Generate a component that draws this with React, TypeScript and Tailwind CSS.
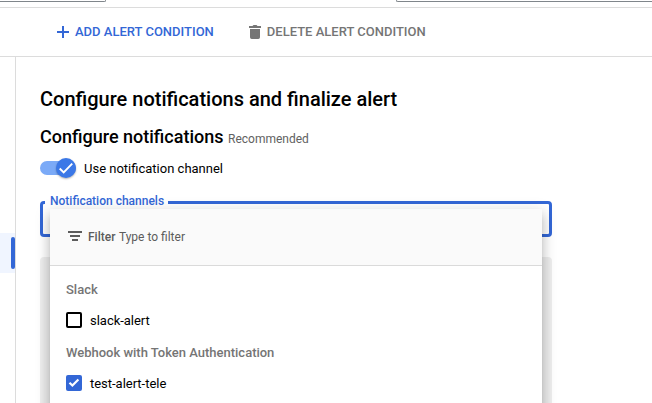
import type { ReactNode } from 'react';

function GroupLabel({ children }: { children: ReactNode }) {
  return <div className="flex h-[30px] items-center pt-0.5 text-[13px] font-medium tracking-[-0.01px] text-[#757575]">{children}</div>;
}

function Option({ label, checked = false }: { label: string; checked?: boolean }) {
  return (
    <label className="mb-px flex h-8 items-center gap-2 text-[13px] tracking-[-0.02px] text-black">
      {checked ? (
        <span className="flex size-4 items-center justify-center rounded-[2px] bg-[#3367d6]">
          <svg viewBox="0 0 16 16" className="size-4" fill="none" stroke="#fff" strokeWidth="2.2">
            <path d="M3.500 7.700 6.400 10.500 12.400 4.400" />
          </svg>
        </span>
      ) : (
        <span className="size-4 rounded-[2px] border-2 border-black" />
      )}
      <span className="pt-0.5">{label}</span>
    </label>
  );
}

function ChannelMenu() {
  return (
    <div className="absolute top-2 left-2.5 h-[300px] w-[492px] bg-white shadow-[0_5px_5px_-3px_rgba(0,0,0,0.2),0_8px_10px_1px_rgba(0,0,0,0.14),0_3px_14px_2px_rgba(0,0,0,0.12)]">
      <div className="flex h-[57px] items-center border-b border-[#dadada] bg-[#fafafa] pb-0.5 pl-[18px] text-[12px] text-[#5c5c5c]">
        <svg viewBox="0 0 14 10" className="h-2.5 w-3.5" fill="#5c5c5c">
          <path d="M0 0h14v2H0zM2 4h10v2H2zM4 8h6v2H4z" />
        </svg>
        <span className="ml-1.5 pt-0.5 font-medium">Filter</span>
        <span className="ml-[3.5px] pt-0.5">Type to filter</span>
      </div>
      <div className="px-4 pt-2">
        <GroupLabel>Slack</GroupLabel>
        <Option label="slack-alert" />
        <GroupLabel>Webhook with Token Authentication</GroupLabel>
        <Option label="test-alert-tele" checked />
      </div>
    </div>
  );
}

export default function App() {
  return (
    <div className="flex h-[403px] w-[652px] flex-col overflow-hidden bg-white font-['Roboto',sans-serif] text-black">
      <div className="flex h-2 shrink-0 items-start justify-between border-b border-[#dcdcdc]">
        <div className="h-0.5 w-[106px] rounded-br-[2px] border-r border-b border-[#80868b]" />
        <div className="h-0.5 w-[256px] rounded-bl-[2px] border-b border-l border-[#80868b]" />
      </div>

      <div className="flex h-[49px] shrink-0 items-center border-b border-[#dcdcdc] pl-[57px] text-[13px] font-medium">
        <button className="flex items-center gap-1.5 text-[#3367d6]">
          <svg viewBox="0 0 12 12" className="size-3" fill="currentColor">
            <path d="M5 0h2v5h5v2H7v5H5V7H0V5h5z" />
          </svg>
          ADD ALERT CONDITION
        </button>
        <button className="ml-[35px] flex items-center gap-1.5 text-[#757575]">
          <svg viewBox="0 0 12 14" className="h-3.5 w-3" fill="currentColor">
            <path d="M0 1h3.5l1-1h3l1 1H12v2H0zM1 4h10v8.3a1.7 1.7 0 0 1-1.7 1.7H2.7A1.7 1.7 0 0 1 1 12.300z" />
          </svg>
          DELETE ALERT CONDITION
        </button>
      </div>

      <div className="flex min-h-0 flex-1">
        <aside className="w-4 shrink-0 border-r border-[#dcdcdc] pt-44">
          <div className="flex h-10 w-[15px] items-center justify-end bg-[#f0f5ff]">
            <div className="h-8 w-1 rounded-[2px] bg-[#3367d6]" />
          </div>
        </aside>

        <main className="w-[536px] shrink-0 pt-[30px] pl-6">
          <h1 className="text-[20px] leading-6 font-medium">Configure notifications and finalize alert</h1>
          <div className="mt-3.5 flex items-baseline gap-[4.5px]">
            <h2 className="text-[18px] leading-6 font-medium">Configure notifications</h2>
            <span className="text-[12px] leading-4 text-[#616161]">Recommended</span>
          </div>
          <div className="mt-[9px] flex h-5 items-center gap-2 text-[13px]">
            <div className="flex h-3.5 w-9 items-center justify-end rounded-full bg-[#7baaf7]">
              <div className="size-5 shrink-0 rounded-full bg-[#3b78e7] shadow-[0_1px_2px_rgba(0,0,0,0.3)]">
                <svg viewBox="0 0 20 20" className="size-5" fill="none" stroke="#fff" strokeWidth="1.9">
                  <path d="M3.700 10.500 7.700 14.500 16.200 5.700" />
                </svg>
              </div>
            </div>
            <span className="pt-0.5">Use notification channel</span>
          </div>

          <div className="relative mt-[23px]">
            <div className="h-9 rounded-[4px] border-[3px] border-[#3367d6]">
              <span className="relative -top-[11px] left-0.5 inline-block bg-white pr-1 pl-[5px] align-top text-[12px] leading-4 font-medium text-[#3367d6]">
                Notification channels
              </span>
            </div>
            <div className="mt-5 h-[220px] rounded-[4px] bg-[#eee]" />
            <ChannelMenu />
          </div>
        </main>
      </div>
    </div>
  );
}
